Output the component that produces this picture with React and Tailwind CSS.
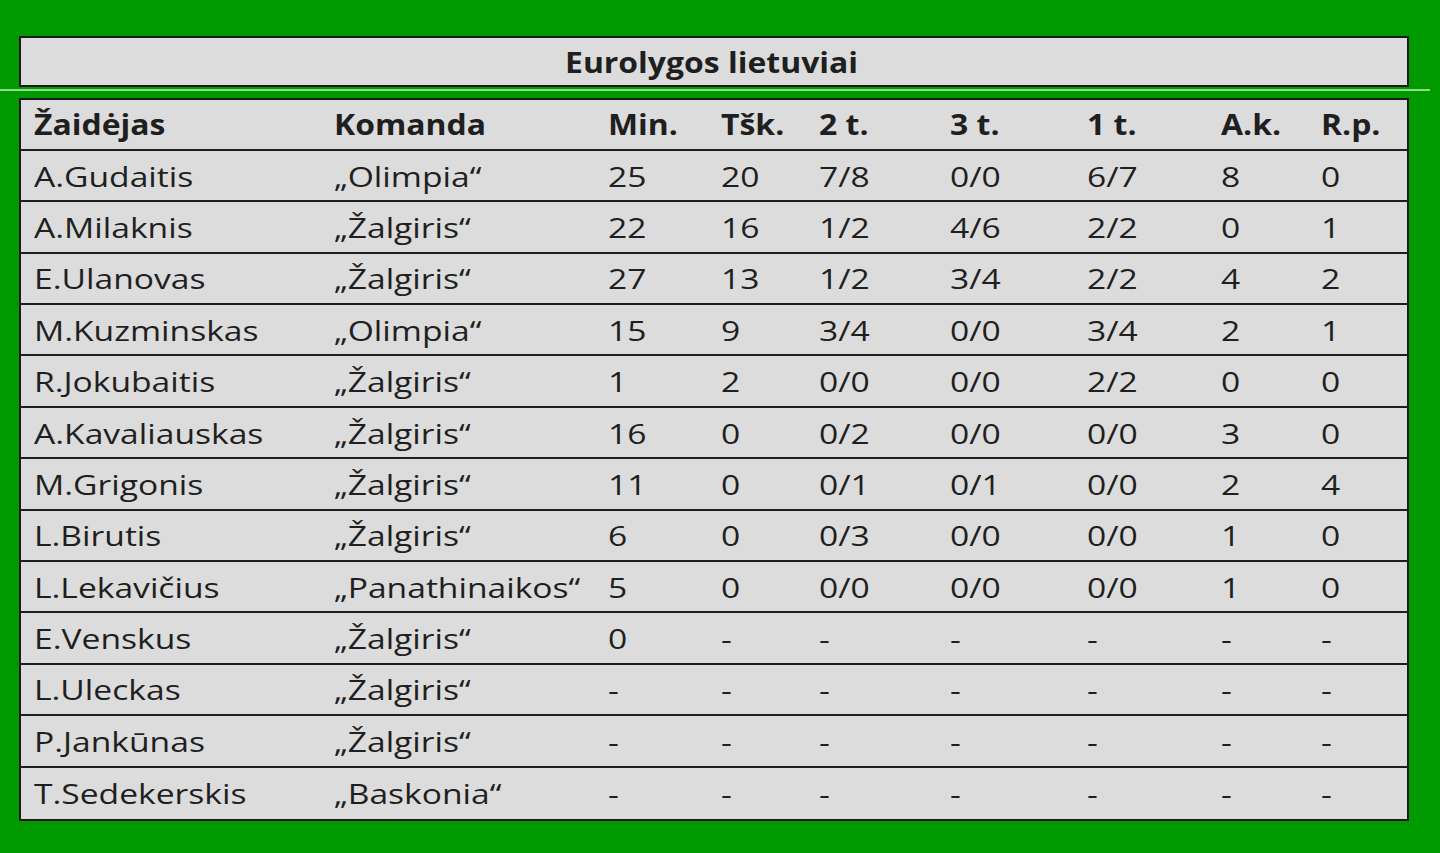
import React from 'react';

const rows = [
  ['A.Gudaitis', '„Olimpia“', '25', '20', '7/8', '0/0', '6/7', '8', '0'],
  ['A.Milaknis', '„Žalgiris“', '22', '16', '1/2', '4/6', '2/2', '0', '1'],
  ['E.Ulanovas', '„Žalgiris“', '27', '13', '1/2', '3/4', '2/2', '4', '2'],
  ['M.Kuzminskas', '„Olimpia“', '15', '9', '3/4', '0/0', '3/4', '2', '1'],
  ['R.Jokubaitis', '„Žalgiris“', '1', '2', '0/0', '0/0', '2/2', '0', '0'],
  ['A.Kavaliauskas', '„Žalgiris“', '16', '0', '0/2', '0/0', '0/0', '3', '0'],
  ['M.Grigonis', '„Žalgiris“', '11', '0', '0/1', '0/1', '0/0', '2', '4'],
  ['L.Birutis', '„Žalgiris“', '6', '0', '0/3', '0/0', '0/0', '1', '0'],
  ['L.Lekavičius', '„Panathinaikos“', '5', '0', '0/0', '0/0', '0/0', '1', '0'],
  ['E.Venskus', '„Žalgiris“', '0', '-', '-', '-', '-', '-', '-'],
  ['L.Uleckas', '„Žalgiris“', '-', '-', '-', '-', '-', '-', '-'],
  ['P.Jankūnas', '„Žalgiris“', '-', '-', '-', '-', '-', '-', '-'],
  ['T.Sedekerskis', '„Baskonia“', '-', '-', '-', '-', '-', '-', '-'],
];

const headers = ['Žaidėjas', 'Komanda', 'Min.', 'Tšk.', '2 t.', '3 t.', '1 t.', 'A.k.', 'R.p.'];

// column widths, measured from the screenshot
const cols = 'grid grid-cols-[300px_274px_113px_98px_131px_137px_134px_100px_1fr]';

// the source image is stretched sideways, so the text gets a horizontal scale
const Row = ({ cells, bold, last }) => (
  <div className={`${cols} h-[51.4px] items-center ${last ? '' : 'border-b-[2.5px] border-[#1e1e1e]'}`}>
    {cells.map((c, i) => (
      <div key={i} className="pl-[13px] whitespace-nowrap text-[28px] leading-none text-[#1f1f1f]">
        <span className={`inline-block origin-left ${bold ? 'font-bold scale-x-[1.14]' : 'scale-x-[1.2]'}`}>{c}</span>
      </div>
    ))}
  </div>
);

export default function App() {
  return (
    <div className="w-[1440px] h-[853px] bg-[#009a00] overflow-hidden pt-[36px]" style={{ fontFamily: '"Open Sans", Lato, sans-serif' }}>
      <div className="ml-[19px] w-[1390px] h-[51px] bg-[#dcdcdc] border-[2.5px] border-[#1a1a1a] flex items-center justify-center">
        <span className="inline-block font-bold text-[28px] text-[#1f1f1f] leading-none scale-x-[1.14] translate-x-[-2px]">Eurolygos lietuviai</span>
      </div>
      <div className="mt-[1.5px] w-[1430px] h-[2px] bg-[#8fdc8f]" />
      <div className="mt-[7px] ml-[19px] w-[1390px] bg-[#dcdcdc] border-[2.5px] border-[#1a1a1a] box-border">
        <Row cells={headers} bold />
        {rows.map((r, i) => (
          <Row key={i} cells={r} last={i === rows.length - 1} />
        ))}
      </div>
    </div>
  );
}
